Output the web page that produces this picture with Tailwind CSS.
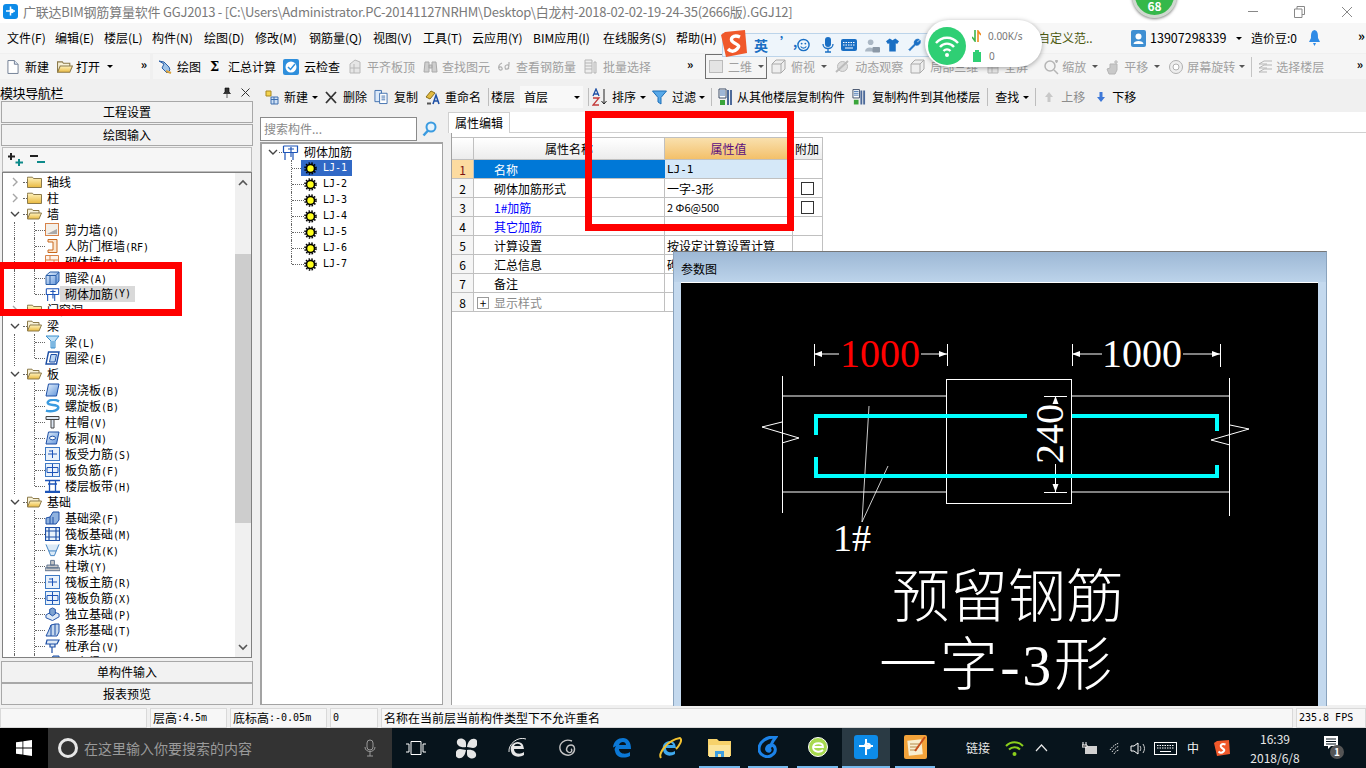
<!DOCTYPE html>
<html lang="zh"><head><meta charset="utf-8"><title>GGJ2013</title>
<script src="https://cdn.jsdelivr.net/npm/@tailwindcss/browser@4"></script></head>
<body class="m-0 overflow-hidden bg-white">
<svg class="absolute h-0 w-0" xmlns="http://www.w3.org/2000/svg">
<defs>
<linearGradient id="fy" x1="0" y1="0" x2="0" y2="1"><stop offset="0" stop-color="#fff3bf"/><stop offset="1" stop-color="#e9b93f"/></linearGradient>
<linearGradient id="bl" x1="0" y1="0" x2="1" y2="1"><stop offset="0" stop-color="#e8f2fc"/><stop offset="1" stop-color="#5e93da"/></linearGradient>
</defs>
<symbol id="folder" viewBox="0 0 15 12"><path d="M.5 2.500V1.200h5l1 1.300h8v9H.5z" fill="url(#fy)" stroke="#8c7a4a"/></symbol>
<symbol id="open" viewBox="0 0 15 12"><path d="M.5 11V1.200h4.500l1 1.300h6V5" fill="#f7f1d8" stroke="#8c7a4a"/><path d="M.5 11 3 5h11.500l-2.500 6z" fill="url(#fy)" stroke="#8c7a4a"/></symbol>
<symbol id="cr" viewBox="0 0 10 10"><path d="M3 1l4 4-4 4" fill="none" stroke="#a6a6a6" stroke-width="1.400"/></symbol>
<symbol id="cd" viewBox="0 0 10 10"><path d="M1 3l4 4 4-4" fill="none" stroke="#444" stroke-width="1.400"/></symbol>
<symbol id="shear" viewBox="0 0 15 14"><rect x=".5" y=".5" width="13" height="12" fill="#f3efe8" stroke="#d7834a"/><path d="M2 11h10V6z" fill="#a9a9a9"/></symbol>
<symbol id="door" viewBox="0 0 15 14"><path d="M3 .5h9v13H3v-2.500h5V3H3z" fill="#fbe6cf" stroke="#c9691f"/></symbol>
<symbol id="brick" viewBox="0 0 15 14"><path d="M.5.500h13v13H.5zM.5 5h13M5 .5V5M9 5v4M.5 9h13" fill="#fdf3ea" stroke="#d7834a"/></symbol>
<symbol id="box" viewBox="0 0 15 14"><path d="M1 4.500 5 1h9v9l-3 3.500H1z" fill="url(#bl)" stroke="#2a5fa8"/><path d="M1 4.500h10V13.500M11 4.500 14 1M5 5v8" fill="none" stroke="#2a5fa8"/></symbol>
<symbol id="rebar" viewBox="0 0 17 15"><path d="M1.500 1h14v6.500M1.500 1v6.500h14M3 7.500V15M11 7.500V15M6 4h6M9 2v10" fill="none" stroke="#1d54b8" stroke-width="1.200"/></symbol>
<symbol id="beam" viewBox="0 0 15 14"><path d="M1 1h13L10 6v7H6V6z" fill="#bfe0f7" stroke="#3a8fcc"/><path d="M8 6v7" stroke="#3a8fcc"/></symbol>
<symbol id="ring" viewBox="0 0 15 14"><path d="M3.500 1H14l-2.500 12H1z" fill="#fff" stroke="#1d4fa5" stroke-width="1.400"/><path d="M6 3.500h5.500L10 11H4.500z" fill="#bcd5f2" stroke="#1d4fa5"/></symbol>
<symbol id="slab" viewBox="0 0 15 14"><path d="M3.500 1H14l-2.500 12H1z" fill="url(#bl)" stroke="#1d4fa5"/></symbol>
<symbol id="spiral" viewBox="0 0 16 14"><path d="M15 2C9-1 2 1 3 4s10 1 11 4-6 6-13 4" fill="none" stroke="#3a9be0" stroke-width="2.600"/></symbol>
<symbol id="cap" viewBox="0 0 15 14"><path d="M1 1.500h13v3H1zM6 4.500h3V13H6z" fill="#dfe8f3" stroke="#444"/></symbol>
<symbol id="hole" viewBox="0 0 15 14"><path d="M3.500 1H14l-2.500 12H1z" fill="url(#bl)" stroke="#1d4fa5"/><ellipse cx="7.500" cy="7" rx="3" ry="1.800" fill="#fff" stroke="#1d4fa5"/></symbol>
<symbol id="panel" viewBox="0 0 15 14"><rect x=".5" y=".5" width="14" height="13" fill="#e9f2fb" stroke="#3e79c4"/><path d="M3 7h9M7.500 3v8M4 4h3" fill="none" stroke="#1d54b8"/></symbol>
<symbol id="panel2" viewBox="0 0 15 14"><rect x=".5" y=".5" width="14" height="13" fill="#e9f2fb" stroke="#3e79c4"/><path d="M2 4.500h11v5H2zM7.500 1v12" fill="none" stroke="#1d54b8"/></symbol>
<symbol id="strip" viewBox="0 0 15 14"><path d="M0 1.500h15M0 12.500h15M4.500 2v10M10.500 2v10M3 5h9" fill="none" stroke="#1d54b8" stroke-width="1.300"/><rect y="12" width="15" height="2" fill="#1d54b8"/></symbol>
<symbol id="fbeam" viewBox="0 0 15 14"><path d="M1 13V7l4-1 3-5h6v8l-3 4z" fill="#8fb2df" stroke="#1d4fa5"/><path d="M5 6v7M8 6v7" stroke="#1d4fa5"/></symbol>
<symbol id="raft" viewBox="0 0 15 14"><path d="M.5.500h14v13H.5zM4 .5v13M11 .5v13M.5 4h14M.5 10h14" fill="#e9f2fb" stroke="#1d4fa5" stroke-width="1.200"/></symbol>
<symbol id="sump" viewBox="0 0 16 14"><path d="M1 1l3 7h8l3-7M4 8l2 5h4l2-5" fill="#dbeaf7" stroke="#3c7fc0"/></symbol>
<symbol id="pier" viewBox="0 0 16 14"><path d="M6 1h4v5H6zM2 6h12v3H2zM0 9h16v3H0z" fill="#c9c9c9" stroke="#5a6f8c"/></symbol>
<symbol id="indep" viewBox="0 0 16 14"><path d="M1 8l7-4 7 3v3l-7 4-7-3z" fill="#dfeaf6" stroke="#1d4fa5"/><path d="M5 7V2l3-1.500L11 2v5L8 9z" fill="#7ea3d1" stroke="#1d4fa5"/></symbol>
<symbol id="stripf" viewBox="0 0 15 14"><path d="M1 13l2-4 3-7 4-1h4v8l-2 4zM6 2v11M10 1v11" fill="#c5d8ee" stroke="#1d4fa5"/></symbol>
<symbol id="pile" viewBox="0 0 15 14"><path d="M2 1h12l-2 4H1zM5 5h5v3H5zM7 8v6" fill="#dfeaf6" stroke="#1d4fa5" stroke-width="1.200"/></symbol>
<symbol id="lj" viewBox="0 0 13 13"><circle cx="6.500" cy="6.500" r="4.800" fill="#000"/><circle cx="6.500" cy="6.500" r="5.500" fill="none" stroke="#000" stroke-width="1.600" stroke-dasharray="1.500 1.400"/><circle cx="6.500" cy="6.500" r="3.200" fill="#ffff1e"/></symbol>
<symbol id="grey" viewBox="0 0 15 15"><path d="M3 14V5l5-4 5 2v11zM3 9h10M7 5v9" fill="#e6e6e6" stroke="#b8b8b8"/></symbol>
<symbol id="cube" viewBox="0 0 15 15"><path d="M1 14V5l4-4h9v9l-4 4zM1 5h9v9M10 5l4-4" fill="#eee" stroke="#aaa"/></symbol>
<symbol id="doc" viewBox="0 0 13 16"><path d="M1 1h7l4 4v10H1z" fill="#fff" stroke="#6b7a90"/><path d="M8 1v4h4" fill="#dfe8f3" stroke="#6b7a90"/></symbol>
<symbol id="sheets" viewBox="0 0 15 16"><path d="M1 1h7v12H1z" fill="#dce9f8" stroke="#3e6fae"/><path d="M6 4h8v11H6z" fill="#fff" stroke="#3e6fae"/><path d="M8 7h4M8 9h4M8 11h4" stroke="#3e6fae"/></symbol>
<symbol id="copy2" viewBox="0 0 15 18"><path d="M1 1h7v9H1z" fill="#fff" stroke="#3c4c66"/><path d="M2 3h5M2 5h5M2 7h5" stroke="#3e6fae"/><path d="M10 2v15M13 2v15" stroke="#4d6a9a" stroke-width="2"/><rect x="2" y="12" width="5" height="5" fill="#3aa53a"/></symbol>
</svg>

<div class="relative flex h-[768px] w-[1366px] flex-col overflow-hidden bg-[#f0f0f0] text-[12px] leading-none text-black font-['Noto_Sans_CJK_SC','Noto_Sans',sans-serif]">

<!-- title bar -->
<header class="flex h-[23px] shrink-0 items-center bg-white text-[#7a7a7a]">
  <svg class="ml-[3px] h-[15px] w-[15px]" viewBox="0 0 15 15"><rect width="15" height="15" rx="3" fill="#0d8be8"/><path d="M7.500 2.500v9M3 7h4c0-2 3-2 3 0s-2 2-2 0M8 7h4" fill="none" stroke="#fff" stroke-width="1.500"/></svg>
  <span class="ml-[5px] whitespace-nowrap text-[13px] tracking-[-0.22px]">广联达BIM钢筋算量软件 GGJ2013 - [C:\Users\Administrator.PC-20141127NRHM\Desktop\白龙村-2018-02-02-19-24-35(2666版).GGJ12]</span>
  <span class="ml-auto flex items-center">
    <i class="h-px w-[10px] bg-[#888]"></i>
    <svg class="ml-[36px] h-[12px] w-[11px]" viewBox="0 0 11 12"><path d="M3 3V.5h7.500v8H8M.5 3h7.500v8.500H.5z" fill="none" stroke="#888"/></svg>
    <svg class="ml-[36px] mr-[13px] h-[12px] w-[12px]" viewBox="0 0 12 12"><path d="M1 1l10 10M11 1 1 11" stroke="#888"/></svg>
  </span>
</header>

<!-- menu bar -->
<nav class="flex h-[30px] shrink-0 items-center bg-[#f7f7f7] pl-[7px] whitespace-nowrap">
  <span class="w-[48px]">文件(F)</span><span class="w-[49px]">编辑(E)</span><span class="w-[48px]">楼层(L)</span><span class="w-[52px]">构件(N)</span><span class="w-[51px]">绘图(D)</span><span class="w-[54px]">修改(M)</span><span class="w-[64px]">钢筋量(Q)</span><span class="w-[50px]">视图(V)</span><span class="w-[49px]">工具(T)</span><span class="w-[61px]">云应用(Y)</span><span class="w-[70px]">BIM应用(I)</span><span class="w-[73px]">在线服务(S)</span><span class="w-[40px]">帮助(H)</span>
  <span class="ml-[322px] w-[52px] text-[#4d5a10]">自定义范..</span>
  <svg class="ml-[41px] h-[17px] w-[15px]" viewBox="0 0 15 17"><rect width="15" height="17" rx="2" fill="#3f8fd2"/><circle cx="7.500" cy="6.500" r="3" fill="#fff"/><path d="M2.500 14c0-4 10-4 10 0z" fill="#fff"/></svg>
  <span class="ml-[4px] w-[77px] text-[12.500px]">13907298339</span>
  <i class="ml-[9px] h-0 w-0 border-x-[3px] border-t-[3px] border-x-transparent border-t-black"></i>
  <span class="ml-[9px] w-[46px]">造价豆:0</span>
  <svg class="ml-[12px] h-[16px] w-[11px]" viewBox="0 0 11 16"><path d="M5.500 0C2 1 2 4 2 8l-2 4h11L9 8c0-4 0-7-3.500-8zM4 13h3l-1.500 3z" fill="#2f8be6"/></svg>
  <span class="ml-[38px] -mt-[6px] text-[13px] font-bold">»</span>
</nav>

<!-- toolbar 1 -->
<div class="mt-px flex h-[25px] shrink-0 items-center whitespace-nowrap">
  <div class="flex h-full w-[150px] items-center bg-[#f5f5f5]">
    <svg class="ml-[7px] h-[16px] w-[12px]"><use href="#doc"/></svg>
    <span class="ml-[6px]">新建</span>
    <svg class="ml-[8px] h-[14px] w-[16px]"><use href="#open"/></svg>
    <span class="ml-[3px]">打开</span>
    <i class="ml-[7px] h-0 w-0 border-x-[3px] border-t-[3px] border-x-transparent border-t-black"></i>
    <span class="ml-auto mr-[3px] -mt-[6px] text-[12px] font-bold">»</span>
  </div>
  <div class="ml-[3px] flex h-full flex-1 items-center bg-[#f5f5f5] text-[#a0a0a0]">
    <svg class="ml-[4px] h-[16px] w-[16px]" viewBox="0 0 16 16"><path d="M2 2l5 3-2 4 5 5 3-3-1-3-5-5z" fill="#9fc3e8" stroke="#2a5fa8"/><path d="M9 12l5 2" stroke="#d9a13a" stroke-width="2"/></svg>
    <span class="ml-[4px] text-black">绘图</span>
    <span class="ml-[9px] w-[10px] text-[13px] font-bold text-black font-['DejaVu_Serif']">Σ</span>
    <span class="ml-[8px] text-black">汇总计算</span>
    <svg class="ml-[7px] h-[16px] w-[16px]" viewBox="0 0 16 16"><rect width="16" height="16" rx="2" fill="#2f8fdc"/><circle cx="8" cy="8" r="5.500" fill="#fff"/><path d="M5 8l2.500 2.500L12 5" fill="none" stroke="#2f8fdc" stroke-width="1.500"/></svg>
    <span class="ml-[5px] text-black">云检查</span>
    <svg class="ml-[7px] h-[15px] w-[15px]"><use href="#grey"/></svg>
    <span class="ml-[5px]">平齐板顶</span>
    <svg class="ml-[8px] h-[15px] w-[15px]" viewBox="0 0 15 15"><path d="M2 3h4v10H1zM9 3h4l1 10H9zM6 6h3v3H6z" fill="#cfcfcf" stroke="#aaa"/></svg>
    <span class="ml-[4px]">查找图元</span>
    <svg class="ml-[7px] h-[12px] w-[13px]" viewBox="0 0 13 12"><path d="M5 2C2 3 1 6 2 8s4 1 3-1-3-1-3 0M8 8c3 1 4-1 4-5V1m0 4c-1-2-4-1-4 1s2 3 4 1" fill="none" stroke="#b0b0b0" stroke-width="1.200"/></svg>
    <span class="ml-[6px]">查看钢筋量</span>
    <svg class="ml-[8px] h-[15px] w-[13px]" viewBox="0 0 13 15"><path d="M1 1h7v13H1zM1 4h7M1 7h7M1 10h7M10 3h2v11h-2z" fill="#eee" stroke="#b5b5b5"/></svg>
    <span class="ml-[6px]">批量选择</span>
    <span class="ml-[36px] w-[8px] -mt-[6px] font-bold text-black">»</span>
    <span class="ml-[10px] flex h-full w-[62px] items-center border border-[#707070] pl-[3px]">
      <i class="h-[13px] w-[14px] border border-[#bbb] bg-[#e4e4e4]"></i>
      <span class="ml-[5px]">二维</span>
      <i class="ml-[6px] h-0 w-0 border-x-[3px] border-t-[3px] border-x-transparent border-t-[#555]"></i>
    </span>
    <svg class="ml-[4px] h-[15px] w-[15px]"><use href="#cube"/></svg>
    <span class="ml-[5px]">俯视</span>
    <i class="ml-[6px] h-0 w-0 border-x-[3px] border-t-[3px] border-x-transparent border-t-[#555]"></i>
    <svg class="ml-[8px] h-[15px] w-[15px]" viewBox="0 0 15 15"><circle cx="7.500" cy="7.500" r="5" fill="#ddd" stroke="#bbb"/><path d="M1 13 13 2" stroke="#bbb" stroke-width="2"/></svg>
    <span class="ml-[5px]">动态观察</span>
    <svg class="ml-[7px] h-[15px] w-[15px]"><use href="#cube"/></svg>
    <span class="ml-[5px]">局部三维</span>
    <svg class="ml-[7px] h-[15px] w-[15px]"><use href="#grey"/></svg>
    <span class="ml-[4px]">全屏</span>
    <svg class="ml-[15px] h-[16px] w-[16px]" viewBox="0 0 16 16"><circle cx="7" cy="7" r="5" fill="#f4f4f4" stroke="#b5b5b5" stroke-width="1.500"/><path d="M11 11l4 4M12 2h3M13.500 1v3" stroke="#b5b5b5" stroke-width="1.500"/></svg>
    <span class="ml-[3px]">缩放</span>
    <i class="ml-[6px] h-0 w-0 border-x-[3px] border-t-[3px] border-x-transparent border-t-[#555]"></i>
    <svg class="ml-[7px] h-[16px] w-[16px]" viewBox="0 0 16 16"><path d="M4 15l-2-5 3-1V5h7v6l-2 4z" fill="#c9c9c9" stroke="#b5b5b5"/><path d="M11 1v4M9 3h4" stroke="#b5b5b5"/></svg>
    <span class="ml-[3px]">平移</span>
    <i class="ml-[6px] h-0 w-0 border-x-[3px] border-t-[3px] border-x-transparent border-t-[#555]"></i>
    <svg class="ml-[8px] h-[16px] w-[16px]" viewBox="0 0 16 16"><circle cx="8" cy="8" r="6.500" fill="#eee" stroke="#b0b0b0"/><circle cx="8" cy="8" r="3" fill="#fff" stroke="#b0b0b0"/></svg>
    <span class="ml-[3px]">屏幕旋转</span>
    <i class="ml-[4px] h-0 w-0 border-x-[3px] border-t-[3px] border-x-transparent border-t-[#555]"></i>
    <i class="ml-[6px] h-[20px] w-px bg-[#c4c4c4]"></i>
    <svg class="ml-[6px] h-[15px] w-[15px]" viewBox="0 0 15 15"><path d="M1 5l5-3h8M1 9l5-3h8M1 13l5-3h8M1 5h8M1 9h8M1 13h8" fill="none" stroke="#b5b5b5"/></svg>
    <span class="ml-[3px]">选择楼层</span>
    <span class="ml-auto mr-[3px] -mt-[6px] font-bold text-black">»</span>
  </div>
</div>

<!-- main -->
<main class="mt-[5px] flex min-h-0 flex-1">
  <!-- left -->
  <aside class="flex w-[255px] shrink-0 flex-col pl-px pr-[2px]">
    <div class="-ml-px flex h-[16px] items-center text-[13px] tracking-[-0.4px]">模块导航栏
      <svg class="ml-[160px] h-[11px] w-[8px]" viewBox="0 0 8 11"><path d="M2 1h4v4l1.500 1.500h-7L2 5zM4 7v4" fill="#333" stroke="#000" stroke-width=".6"/></svg>
      <svg class="ml-[10px] h-[9px] w-[9px]" viewBox="0 0 9 9"><path d="M.5.500l8 8M8.500.500l-8 8" stroke="#333"/></svg>
    </div>
    <button class="mt-px h-[22px] border border-[#a8a8a8] bg-[#f2f2f2]">工程设置</button>
    <button class="mt-px h-[22px] border border-[#a8a8a8] bg-[#f2f2f2]">绘图输入</button>
    <div class="ml-px mr-px mt-px flex h-[25px] shrink-0 items-center border border-[#bdbdbd] bg-[#f6f6f6] pl-[4px]">
      <svg class="h-[15px] w-[17px]" viewBox="0 0 17 15"><path d="M4 1v7M1 4.500h7" stroke="#222" stroke-width="2"/><path d="M12 7v7M8.500 10.500h7.500" stroke="#0d8a8a" stroke-width="2"/></svg>
      <svg class="ml-[6px] h-[15px] w-[16px]" viewBox="0 0 16 15"><path d="M0 4h8" stroke="#222" stroke-width="2"/><path d="M7 10h8" stroke="#0d8a8a" stroke-width="2"/></svg>
    </div>
    <div class="relative mx-px h-[486px] shrink-0 overflow-hidden border border-[#808080] bg-white pt-px [&_small]:text-[10px] [&_small]:font-['DejaVu_Sans_Mono']">
      <div class="absolute right-0 top-0 flex h-full w-[16px] flex-col items-center bg-[#f0f0f0]">
        <svg class="mt-[5px] h-[10px] w-[10px] shrink-0" viewBox="0 0 10 10"><path d="M1 7l4-4 4 4" fill="none" stroke="#555" stroke-width="1.600"/></svg>
        <i class="mt-[66px] h-[269px] w-full shrink-0 bg-[#cdcdcd]"></i>
        <svg class="mt-auto mb-[5px] h-[10px] w-[10px] shrink-0" viewBox="0 0 10 10"><path d="M1 3l4 4 4-4" fill="none" stroke="#555" stroke-width="1.600"/></svg>
      </div>
      <div class="flex h-4 items-center"><svg class="ml-[7px] h-[10px] w-[10px]"><use href="#cr"/></svg><i class="ml-[3px] w-[4px] border-t border-dotted border-[#666]"></i><svg class="h-[12px] w-[15px]"><use href="#folder"/></svg><span class="ml-[5px]">轴线</span></div>
      <div class="flex h-4 items-center"><svg class="ml-[7px] h-[10px] w-[10px]"><use href="#cr"/></svg><i class="ml-[3px] w-[4px] border-t border-dotted border-[#666]"></i><svg class="h-[12px] w-[15px]"><use href="#folder"/></svg><span class="ml-[5px]">柱</span></div>
      <div class="flex h-4 items-center"><svg class="ml-[7px] h-[10px] w-[10px]"><use href="#cd"/></svg><i class="ml-[3px] w-[4px] border-t border-dotted border-[#666]"></i><svg class="h-[12px] w-[15px]"><use href="#open"/></svg><span class="ml-[5px]">墙</span></div>
      <div class="flex h-4 items-center"><i class="w-[12px] self-stretch border-r border-dotted border-[#666]"></i><i class="w-[20px] self-stretch border-r border-dotted border-[#666]"></i><i class="w-[10px] border-t border-dotted border-[#666]"></i><svg class="h-[14px] w-[15px]"><use href="#shear"/></svg><span class="ml-[5px]">剪力墙<small>(Q)</small></span></div>
      <div class="flex h-4 items-center"><i class="w-[12px] self-stretch border-r border-dotted border-[#666]"></i><i class="w-[20px] self-stretch border-r border-dotted border-[#666]"></i><i class="w-[10px] border-t border-dotted border-[#666]"></i><svg class="h-[14px] w-[15px]"><use href="#door"/></svg><span class="ml-[5px]">人防门框墙<small>(RF)</small></span></div>
      <div class="flex h-4 items-center"><i class="w-[12px] self-stretch border-r border-dotted border-[#666]"></i><i class="w-[20px] self-stretch border-r border-dotted border-[#666]"></i><i class="w-[10px] border-t border-dotted border-[#666]"></i><svg class="h-[14px] w-[15px]"><use href="#brick"/></svg><span class="ml-[5px]">砌体墙<small>(Q)</small></span></div>
      <div class="flex h-4 items-center"><i class="w-[12px] self-stretch border-r border-dotted border-[#666]"></i><i class="w-[20px] self-stretch border-r border-dotted border-[#666]"></i><i class="w-[10px] border-t border-dotted border-[#666]"></i><svg class="h-[14px] w-[15px]"><use href="#box"/></svg><span class="ml-[5px]">暗梁<small>(A)</small></span></div>
      <div class="flex h-4 items-center"><i class="w-[12px] self-stretch border-r border-dotted border-[#666]"></i><i class="h-2 w-[20px] self-start border-r border-dotted border-[#666]"></i><i class="w-[10px] border-t border-dotted border-[#666]"></i><svg class="h-[15px] w-[15px]"><use href="#rebar"/></svg><span class="flex h-4 items-center bg-[#d9d9d9] pl-[5px] pr-[4px]">砌体加筋<small>(Y)</small></span></div>
      <div class="flex h-4 items-center"><svg class="ml-[7px] h-[10px] w-[10px]"><use href="#cr"/></svg><i class="ml-[3px] w-[4px] border-t border-dotted border-[#666]"></i><svg class="h-[12px] w-[15px]"><use href="#folder"/></svg><span class="ml-[5px]">门窗洞</span></div>
      <div class="flex h-4 items-center"><svg class="ml-[7px] h-[10px] w-[10px]"><use href="#cd"/></svg><i class="ml-[3px] w-[4px] border-t border-dotted border-[#666]"></i><svg class="h-[12px] w-[15px]"><use href="#open"/></svg><span class="ml-[5px]">梁</span></div>
      <div class="flex h-4 items-center"><i class="w-[12px] self-stretch border-r border-dotted border-[#666]"></i><i class="w-[20px] self-stretch border-r border-dotted border-[#666]"></i><i class="w-[10px] border-t border-dotted border-[#666]"></i><svg class="h-[14px] w-[15px]"><use href="#beam"/></svg><span class="ml-[5px]">梁<small>(L)</small></span></div>
      <div class="flex h-4 items-center"><i class="w-[12px] self-stretch border-r border-dotted border-[#666]"></i><i class="h-2 w-[20px] self-start border-r border-dotted border-[#666]"></i><i class="w-[10px] border-t border-dotted border-[#666]"></i><svg class="h-[14px] w-[15px]"><use href="#ring"/></svg><span class="ml-[5px]">圈梁<small>(E)</small></span></div>
      <div class="flex h-4 items-center"><svg class="ml-[7px] h-[10px] w-[10px]"><use href="#cd"/></svg><i class="ml-[3px] w-[4px] border-t border-dotted border-[#666]"></i><svg class="h-[12px] w-[15px]"><use href="#open"/></svg><span class="ml-[5px]">板</span></div>
      <div class="flex h-4 items-center"><i class="w-[12px] self-stretch border-r border-dotted border-[#666]"></i><i class="w-[20px] self-stretch border-r border-dotted border-[#666]"></i><i class="w-[10px] border-t border-dotted border-[#666]"></i><svg class="h-[14px] w-[15px]"><use href="#slab"/></svg><span class="ml-[5px]">现浇板<small>(B)</small></span></div>
      <div class="flex h-4 items-center"><i class="w-[12px] self-stretch border-r border-dotted border-[#666]"></i><i class="w-[20px] self-stretch border-r border-dotted border-[#666]"></i><i class="w-[10px] border-t border-dotted border-[#666]"></i><svg class="h-[14px] w-[15px]"><use href="#spiral"/></svg><span class="ml-[5px]">螺旋板<small>(B)</small></span></div>
      <div class="flex h-4 items-center"><i class="w-[12px] self-stretch border-r border-dotted border-[#666]"></i><i class="w-[20px] self-stretch border-r border-dotted border-[#666]"></i><i class="w-[10px] border-t border-dotted border-[#666]"></i><svg class="h-[14px] w-[15px]"><use href="#cap"/></svg><span class="ml-[5px]">柱帽<small>(V)</small></span></div>
      <div class="flex h-4 items-center"><i class="w-[12px] self-stretch border-r border-dotted border-[#666]"></i><i class="w-[20px] self-stretch border-r border-dotted border-[#666]"></i><i class="w-[10px] border-t border-dotted border-[#666]"></i><svg class="h-[14px] w-[15px]"><use href="#hole"/></svg><span class="ml-[5px]">板洞<small>(N)</small></span></div>
      <div class="flex h-4 items-center"><i class="w-[12px] self-stretch border-r border-dotted border-[#666]"></i><i class="w-[20px] self-stretch border-r border-dotted border-[#666]"></i><i class="w-[10px] border-t border-dotted border-[#666]"></i><svg class="h-[14px] w-[15px]"><use href="#panel"/></svg><span class="ml-[5px]">板受力筋<small>(S)</small></span></div>
      <div class="flex h-4 items-center"><i class="w-[12px] self-stretch border-r border-dotted border-[#666]"></i><i class="w-[20px] self-stretch border-r border-dotted border-[#666]"></i><i class="w-[10px] border-t border-dotted border-[#666]"></i><svg class="h-[14px] w-[15px]"><use href="#panel2"/></svg><span class="ml-[5px]">板负筋<small>(F)</small></span></div>
      <div class="flex h-4 items-center"><i class="w-[12px] self-stretch border-r border-dotted border-[#666]"></i><i class="h-2 w-[20px] self-start border-r border-dotted border-[#666]"></i><i class="w-[10px] border-t border-dotted border-[#666]"></i><svg class="h-[14px] w-[15px]"><use href="#strip"/></svg><span class="ml-[5px]">楼层板带<small>(H)</small></span></div>
      <div class="flex h-4 items-center"><svg class="ml-[7px] h-[10px] w-[10px]"><use href="#cd"/></svg><i class="ml-[3px] w-[4px] border-t border-dotted border-[#666]"></i><svg class="h-[12px] w-[15px]"><use href="#open"/></svg><span class="ml-[5px]">基础</span></div>
      <div class="flex h-4 items-center"><i class="w-[12px] self-stretch border-r border-dotted border-[#666]"></i><i class="w-[20px] self-stretch border-r border-dotted border-[#666]"></i><i class="w-[10px] border-t border-dotted border-[#666]"></i><svg class="h-[14px] w-[15px]"><use href="#fbeam"/></svg><span class="ml-[5px]">基础梁<small>(F)</small></span></div>
      <div class="flex h-4 items-center"><i class="w-[12px] self-stretch border-r border-dotted border-[#666]"></i><i class="w-[20px] self-stretch border-r border-dotted border-[#666]"></i><i class="w-[10px] border-t border-dotted border-[#666]"></i><svg class="h-[14px] w-[15px]"><use href="#raft"/></svg><span class="ml-[5px]">筏板基础<small>(M)</small></span></div>
      <div class="flex h-4 items-center"><i class="w-[12px] self-stretch border-r border-dotted border-[#666]"></i><i class="w-[20px] self-stretch border-r border-dotted border-[#666]"></i><i class="w-[10px] border-t border-dotted border-[#666]"></i><svg class="h-[14px] w-[15px]"><use href="#sump"/></svg><span class="ml-[5px]">集水坑<small>(K)</small></span></div>
      <div class="flex h-4 items-center"><i class="w-[12px] self-stretch border-r border-dotted border-[#666]"></i><i class="w-[20px] self-stretch border-r border-dotted border-[#666]"></i><i class="w-[10px] border-t border-dotted border-[#666]"></i><svg class="h-[14px] w-[15px]"><use href="#pier"/></svg><span class="ml-[5px]">柱墩<small>(Y)</small></span></div>
      <div class="flex h-4 items-center"><i class="w-[12px] self-stretch border-r border-dotted border-[#666]"></i><i class="w-[20px] self-stretch border-r border-dotted border-[#666]"></i><i class="w-[10px] border-t border-dotted border-[#666]"></i><svg class="h-[14px] w-[15px]"><use href="#panel"/></svg><span class="ml-[5px]">筏板主筋<small>(R)</small></span></div>
      <div class="flex h-4 items-center"><i class="w-[12px] self-stretch border-r border-dotted border-[#666]"></i><i class="w-[20px] self-stretch border-r border-dotted border-[#666]"></i><i class="w-[10px] border-t border-dotted border-[#666]"></i><svg class="h-[14px] w-[15px]"><use href="#panel2"/></svg><span class="ml-[5px]">筏板负筋<small>(X)</small></span></div>
      <div class="flex h-4 items-center"><i class="w-[12px] self-stretch border-r border-dotted border-[#666]"></i><i class="w-[20px] self-stretch border-r border-dotted border-[#666]"></i><i class="w-[10px] border-t border-dotted border-[#666]"></i><svg class="h-[14px] w-[15px]"><use href="#indep"/></svg><span class="ml-[5px]">独立基础<small>(P)</small></span></div>
      <div class="flex h-4 items-center"><i class="w-[12px] self-stretch border-r border-dotted border-[#666]"></i><i class="w-[20px] self-stretch border-r border-dotted border-[#666]"></i><i class="w-[10px] border-t border-dotted border-[#666]"></i><svg class="h-[14px] w-[15px]"><use href="#stripf"/></svg><span class="ml-[5px]">条形基础<small>(T)</small></span></div>
      <div class="flex h-4 items-center"><i class="w-[12px] self-stretch border-r border-dotted border-[#666]"></i><i class="w-[20px] self-stretch border-r border-dotted border-[#666]"></i><i class="w-[10px] border-t border-dotted border-[#666]"></i><svg class="h-[14px] w-[15px]"><use href="#pile"/></svg><span class="ml-[5px]">桩承台<small>(V)</small></span></div>
      <div class="flex h-4 items-center"><i class="w-[12px] self-stretch border-r border-dotted border-[#666]"></i><i class="w-[20px] self-stretch border-r border-dotted border-[#666]"></i><i class="w-[10px] border-t border-dotted border-[#666]"></i><svg class="h-[14px] w-[15px]"><use href="#fbeam"/></svg><span class="ml-[5px]">承台梁<small>(P)</small></span></div>
    </div>
    <button class="mt-[3px] h-[22px] shrink-0 border border-[#a8a8a8] bg-[#f2f2f2]">单构件输入</button>
    <button class="h-[22px] shrink-0 border border-[#a8a8a8] bg-[#f2f2f2]">报表预览</button>
  </aside>

  <!-- right of left panel -->
  <section class="flex min-w-0 flex-1 flex-col">
    <div class="flex h-[28px] shrink-0 items-center whitespace-nowrap pb-[2px]">
      <svg class="ml-[10px] h-[15px] w-[14px]" viewBox="0 0 14 15"><path d="M1 1h5v5H1z" fill="#f3d24e" stroke="#a8871e"/><path d="M6 7h7v7H6z" fill="#cfe1f6" stroke="#3e6fae"/><path d="M6 9.500h7M9 7v7" stroke="#3e6fae"/></svg>
      <span class="ml-[5px]">新建</span>
      <i class="ml-[4px] h-0 w-0 border-x-[3px] border-t-[3px] border-x-transparent border-t-black"></i>
      <svg class="ml-[7px] h-[13px] w-[12px]" viewBox="0 0 12 13"><path d="M1 1l10 11M11 1 1 12" stroke="#333" stroke-width="1.800"/></svg>
      <span class="ml-[6px]">删除</span>
      <svg class="ml-[7px] h-[16px] w-[14px]"><use href="#sheets"/></svg>
      <span class="ml-[6px]">复制</span>
      <svg class="ml-[7px] h-[16px] w-[16px]" viewBox="0 0 16 16"><path d="M1 8l5-6 4 2-5 6z" fill="#e2bb42" stroke="#8a6e17"/><path d="M2 14.500h4" stroke="#555" stroke-width="2"/><path d="M8 15l3-9 3 9M9 12h4" fill="none" stroke="#1d4fa5" stroke-width="1.500"/></svg>
      <span class="ml-[4px]">重命名</span>
      <i class="ml-[7px] h-[18px] w-px bg-[#bdbdbd]"></i>
      <span class="ml-[2px]">楼层</span>
      <span class="ml-[5px] flex h-[22px] w-[63px] items-center bg-[#f8f8f8] pl-[4px]">首层<i class="ml-auto mr-[3px] h-0 w-0 border-x-[3px] border-t-[3px] border-x-transparent border-t-black"></i></span>
      <i class="ml-[5px] h-[18px] w-px bg-[#bdbdbd]"></i>
      <svg class="ml-[3px] h-[18px] w-[16px]" viewBox="0 0 16 18"><path d="M1 8l3-7 3 7M2 6h4" fill="none" stroke="#1d4fa5" stroke-width="1.300"/><path d="M1 10h6L1 17h6" fill="none" stroke="#c23a3a" stroke-width="1.300"/><path d="M12 1v15M9.500 13l2.500 3 2.500-3" fill="none" stroke="#222"/></svg>
      <span class="ml-[4px]">排序</span>
      <i class="ml-[4px] h-0 w-0 border-x-[3px] border-t-[3px] border-x-transparent border-t-black"></i>
      <svg class="ml-[6px] h-[15px] w-[15px]" viewBox="0 0 15 15"><path d="M.5 1h14L9 7.500V14l-3-2V7.500z" fill="#57a8e8" stroke="#1d6fb8"/></svg>
      <span class="ml-[5px]">过滤</span>
      <i class="ml-[3px] h-0 w-0 border-x-[3px] border-t-[3px] border-x-transparent border-t-black"></i>
      <i class="ml-[6px] h-[18px] w-px bg-[#bdbdbd]"></i>
      <svg class="ml-[6px] h-[18px] w-[15px]"><use href="#copy2"/></svg>
      <span class="ml-[4px]">从其他楼层复制构件</span>
      <svg class="ml-[7px] h-[18px] w-[14px]"><use href="#copy2"/></svg>
      <span class="ml-[6px]">复制构件到其他楼层</span>
      <i class="ml-[7px] h-[18px] w-px bg-[#bdbdbd]"></i>
      <span class="ml-[7px]">查找</span>
      <i class="ml-[4px] h-0 w-0 border-x-[3px] border-t-[3px] border-x-transparent border-t-black"></i>
      <i class="ml-[6px] h-[18px] w-px bg-[#bdbdbd]"></i>
      <svg class="ml-[9px] h-[10px] w-[8px]" viewBox="0 0 8 10"><path d="M4 0l4 5H5.500v5h-3V5H0z" fill="#c8c8c8"/></svg>
      <span class="ml-[8px] text-[#8c8c8c]">上移</span>
      <svg class="ml-[12px] h-[10px] w-[8px]" viewBox="0 0 8 10"><path d="M4 10 0 5h2.500V0h3v5H8z" fill="#3e78d8"/></svg>
      <span class="ml-[7px]">下移</span>
    </div>
    <div class="flex min-h-0 flex-1">
      <!-- component column -->
      <div class="ml-[5px] flex w-[183px] shrink-0 flex-col">
        <div class="mt-[5px] flex h-[24px] shrink-0 items-center">
          <span class="flex h-[24px] w-[157px] items-center border border-[#8a8a8a] bg-white pl-[3px] text-[#8a8a8a]">搜索构件...</span>
          <svg class="ml-[5px] h-[16px] w-[15px]" viewBox="0 0 15 16"><circle cx="9" cy="6" r="4.500" fill="#e6f3fc" stroke="#3a9be0" stroke-width="2"/><path d="M6 9.500 1.500 14.500" stroke="#3a9be0" stroke-width="2.500"/></svg>
        </div>
        <div class="mt-px flex-1 border-2 border-b border-r border-[#a3a3a3] bg-white [&_small]:text-[10px] [&_small]:font-['DejaVu_Sans_Mono']">
          <div class="flex h-4 items-center"><svg class="ml-[6px] h-[10px] w-[10px]"><use href="#cd"/></svg><i class="ml-[1px] w-[3px] border-t border-dotted border-[#666]"></i><svg class="h-[15px] w-[17px]"><use href="#rebar"/></svg><span class="ml-[5px]">砌体加筋</span></div>
          <div class="flex h-4 items-center"><i class="h-full w-[30px] border-r border-dotted border-[#666]"></i><i class="w-[9px] border-t border-dotted border-[#666]"></i><span class="flex h-4 w-[51px] items-center bg-[#3169c6] pl-[3px] text-white"><svg class="h-[13px] w-[13px]"><use href="#lj"/></svg><small class="ml-[6px]">LJ-1</small></span></div>
          <div class="flex h-4 items-center"><i class="h-full w-[30px] border-r border-dotted border-[#666]"></i><i class="w-[12px] border-t border-dotted border-[#666]"></i><svg class="h-[13px] w-[13px]"><use href="#lj"/></svg><small class="ml-[6px]">LJ-2</small></div>
          <div class="flex h-4 items-center"><i class="h-full w-[30px] border-r border-dotted border-[#666]"></i><i class="w-[12px] border-t border-dotted border-[#666]"></i><svg class="h-[13px] w-[13px]"><use href="#lj"/></svg><small class="ml-[6px]">LJ-3</small></div>
          <div class="flex h-4 items-center"><i class="h-full w-[30px] border-r border-dotted border-[#666]"></i><i class="w-[12px] border-t border-dotted border-[#666]"></i><svg class="h-[13px] w-[13px]"><use href="#lj"/></svg><small class="ml-[6px]">LJ-4</small></div>
          <div class="flex h-4 items-center"><i class="h-full w-[30px] border-r border-dotted border-[#666]"></i><i class="w-[12px] border-t border-dotted border-[#666]"></i><svg class="h-[13px] w-[13px]"><use href="#lj"/></svg><small class="ml-[6px]">LJ-5</small></div>
          <div class="flex h-4 items-center"><i class="h-full w-[30px] border-r border-dotted border-[#666]"></i><i class="w-[12px] border-t border-dotted border-[#666]"></i><svg class="h-[13px] w-[13px]"><use href="#lj"/></svg><small class="ml-[6px]">LJ-6</small></div>
          <div class="flex h-4 items-center"><i class="h-2 w-[30px] self-start border-r border-dotted border-[#666]"></i><i class="w-[12px] border-t border-dotted border-[#666]"></i><svg class="h-[13px] w-[13px]"><use href="#lj"/></svg><small class="ml-[6px]">LJ-7</small></div>
        </div>
      </div>
      <!-- property pane -->
      <div class="ml-[5px] flex min-w-0 flex-1 flex-col">
        <div class="flex h-[21px] shrink-0">
          <span class="flex w-[62px] items-center justify-center border border-b-0 border-[#d0d0d0] bg-white">属性编辑</span>
          <span class="flex-1 border-b border-[#d0d0d0] bg-white"></span>
        </div>
        <div class="ml-[3px] flex-1 border-l border-[#a0a0a0] bg-white pt-[4px]">
          <div class="w-[371px] border-t border-[#c0c0c0]">
            <div class="flex h-[22px] border-b border-[#c0c0c0]">
              <span class="w-[22px] border-r border-[#c0c0c0] bg-gradient-to-b from-white to-[#ececec]"></span>
              <span class="flex w-[191px] items-center justify-center border-r border-[#c0c0c0] bg-gradient-to-b from-white to-[#ececec]">属性名称</span>
              <span class="flex w-[127px] items-center justify-center bg-gradient-to-b from-[#f9e0ad] to-[#f3c069] text-[#5b0f7f]">属性值</span>
              <span class="flex flex-1 items-center justify-center border-r border-[#c0c0c0] bg-gradient-to-b from-white to-[#ececec]">附加</span>
            </div>
            <div class="[&>div>span]:pt-px">
            <div class="flex h-[19px] items-center border-b border-[#c0c0c0]">
              <span class="flex h-full w-[22px] items-center justify-center border-r border-[#c0c0c0] bg-[#fcdba0] text-[#7a1010]">1</span>
              <span class="flex h-full w-[191px] items-center bg-[#0078d7] pl-[20px] text-white">名称</span>
              <span class="flex h-full w-[127px] items-center bg-[#d5e8f8] pl-[2px] text-[11px] font-['DejaVu_Sans_Mono']">LJ-1</span>
              <span class="h-full flex-1 border-x border-[#c0c0c0]"></span>
            </div>
            <div class="flex h-[19px] items-center border-b border-[#c0c0c0]">
              <span class="flex h-full w-[22px] items-center justify-center border-r border-[#c0c0c0] bg-[#f5f5f5]">2</span>
              <span class="flex h-full w-[191px] items-center border-r border-[#c0c0c0] pl-[20px]">砌体加筋形式</span>
              <span class="flex h-full w-[127px] items-center pl-[2px]">一字-3形</span>
              <span class="flex h-full flex-1 items-center justify-center border-x border-[#c0c0c0]"><i class="h-[13px] w-[13px] border border-[#333] bg-white"></i></span>
            </div>
            <div class="flex h-[19px] items-center border-b border-[#c0c0c0]">
              <span class="flex h-full w-[22px] items-center justify-center border-r border-[#c0c0c0] bg-[#f5f5f5]">3</span>
              <span class="flex h-full w-[191px] items-center border-r border-[#c0c0c0] pl-[20px] text-[#0000ff]">1#加筋</span>
              <span class="flex h-full w-[127px] items-center pl-[2px] text-[11px]">2 Φ6@500</span>
              <span class="flex h-full flex-1 items-center justify-center border-x border-[#c0c0c0]"><i class="h-[13px] w-[13px] border border-[#333] bg-white"></i></span>
            </div>
            <div class="flex h-[19px] items-center border-b border-[#c0c0c0]">
              <span class="flex h-full w-[22px] items-center justify-center border-r border-[#c0c0c0] bg-[#f5f5f5]">4</span>
              <span class="flex h-full w-[191px] items-center border-r border-[#c0c0c0] pl-[20px] text-[#0000ff]">其它加筋</span>
              <span class="h-full w-[127px]"></span>
              <span class="h-full flex-1 border-x border-[#c0c0c0]"></span>
            </div>
            <div class="flex h-[19px] items-center border-b border-[#c0c0c0]">
              <span class="flex h-full w-[22px] items-center justify-center border-r border-[#c0c0c0] bg-[#f5f5f5]">5</span>
              <span class="flex h-full w-[191px] items-center border-r border-[#c0c0c0] pl-[20px]">计算设置</span>
              <span class="flex h-full w-[127px] items-center pl-[2px]">按设定计算设置计算</span>
              <span class="h-full flex-1 border-x border-[#c0c0c0]"></span>
            </div>
            <div class="flex h-[19px] items-center border-b border-[#c0c0c0]">
              <span class="flex h-full w-[22px] items-center justify-center border-r border-[#c0c0c0] bg-[#f5f5f5]">6</span>
              <span class="flex h-full w-[191px] items-center border-r border-[#c0c0c0] pl-[20px]">汇总信息</span>
              <span class="flex h-full w-[127px] items-center pl-[2px]">砌体加筋</span>
              <span class="h-full flex-1 border-x border-[#c0c0c0]"></span>
            </div>
            <div class="flex h-[19px] items-center border-b border-[#c0c0c0]">
              <span class="flex h-full w-[22px] items-center justify-center border-r border-[#c0c0c0] bg-[#f5f5f5]">7</span>
              <span class="flex h-full w-[191px] items-center border-r border-[#c0c0c0] pl-[20px]">备注</span>
              <span class="h-full w-[127px]"></span>
              <span class="h-full flex-1 border-x border-[#c0c0c0]"></span>
            </div>
            <div class="flex h-[19px] items-center border-b border-[#c0c0c0]">
              <span class="flex h-full w-[22px] items-center justify-center border-r border-[#c0c0c0] bg-[#f5f5f5]">8</span>
              <span class="flex h-full w-[191px] items-center border-r border-[#c0c0c0] pl-[3px] text-[#8a8a8a]"><i class="flex h-[12px] w-[12px] items-center justify-center border border-[#9a9a9a] not-italic text-black">+</i><span class="ml-[5px]">显示样式</span></span>
              <span class="h-full w-[127px]"></span>
              <span class="h-full flex-1 border-x border-[#c0c0c0]"></span>
            </div>
            </div>
          </div>
        </div>
      </div>
    </div>
  </section>
</main>

<!-- status bar -->
<footer class="mt-[3px] flex h-[20px] shrink-0 items-stretch gap-[3px] whitespace-nowrap bg-[#f0f0f0] [&>span]:flex [&>span]:items-center [&>span]:border [&>span]:border-[#d9d9d9] [&>span]:bg-[#f7f7f7] [&>span]:pl-[2px] [&_small]:text-[10px] [&_small]:font-['DejaVu_Sans_Mono']">
  <span class="w-[147px]"></span>
  <span class="w-[77px]">层高<small>:4.5m</small></span>
  <span class="w-[97px]">底标高<small>:-0.05m</small></span>
  <span class="w-[48px]"><small>0</small></span>
  <span class="flex-1">名称在当前层当前构件类型下不允许重名</span>
  <span class="w-[70px]"><small>235.8 FPS</small></span>
</footer>

<!-- taskbar -->
<div class="flex h-[40px] shrink-0 items-center whitespace-nowrap bg-[#07141c] text-[#e8e8e8]">
  <div class="flex h-full w-[48px] items-center justify-center bg-black">
    <svg class="h-[16px] w-[16px]" viewBox="0 0 16 16"><path d="M0 2.300 6.500 1.400v6.200H0zM7.300 1.300 16 0v7.600H7.300zM0 8.400h6.500v6.200L0 13.700zM7.300 8.400H16V16l-8.700-1.200z" fill="#fff"/></svg>
  </div>
  <div class="flex h-full w-[344px] items-center bg-[#333] text-[14px] text-[#9a9a9a]">
    <i class="ml-[10px] h-[20px] w-[20px] rounded-full border-[3px] border-[#e6e6e6]"></i>
    <span class="ml-[6px]">在这里输入你要搜索的内容</span>
    <svg class="ml-[112px] h-[18px] w-[12px]" viewBox="0 0 12 18"><rect x="3" y="1" width="6" height="10" rx="3" fill="none" stroke="#9a9a9a"/><path d="M1 8c0 6 10 6 10 0M6 13v4M3 17h6" fill="none" stroke="#9a9a9a"/></svg>
  </div>
  <svg class="ml-[14px] h-[14px] w-[20px]" viewBox="0 0 20 14"><path d="M5 .5h10v13H5zM0 3h3v8H0M20 3h-3v8h3" fill="none" stroke="#fff"/></svg>
  <svg class="ml-[30px] h-[21px] w-[21px]" viewBox="0 0 21 21"><path d="M10 9C4 10 0 7 1 3s9-3 9 2zM11 9c1-6 4-9 8-8s3 9-2 9zM11 12c6-1 10 2 9 6s-9 3-9-2zM10 12c-1 6-4 9-8 8s-3-9 2-9z" fill="#e6e6e6"/></svg>
  <svg class="ml-[31px] h-[21px] w-[20px]" viewBox="0 0 20 21"><path d="M3 13c-2-8 8-12 12-6l1 4H6c0 5 6 6 10 3v3c-5 3-12 2-13-4zM6 8h7c-1-3-6-3-7 0z" fill="#e6e6e6"/><path d="M1 14C0 6 10-2 18 1" fill="none" stroke="#e6e6e6"/></svg>
  <svg class="ml-[30px] h-[20px] w-[19px]" viewBox="0 0 19 20"><path d="M14 3C6 0 1 6 2 11s8 8 12 5 3-9-1-9-6 5-3 7 5-2 3-3" fill="none" stroke="#c4c4c4" stroke-width="1.400"/></svg>
  <svg class="ml-[35px] h-[20px] w-[20px]" viewBox="0 0 20 20"><path d="M1 9C2 3 6 0 11 0c5 0 8 4 8 11H7c0 5 7 6 11 3v4c-6 3-14 2-15-5-1-2 0-3 1-5-2 1-3 2-3 1zM7 7h7c0-4-6-4-7 0z" fill="#0b78d6"/></svg>
  <svg class="ml-[26px] h-[24px] w-[24px]" viewBox="0 0 24 24"><path d="M5 14c-2-8 8-12 12-6l1 4H8c0 5 6 5 9 3v3c-5 3-11 2-12-4zM8 9h7c-1-3-6-3-7 0z" fill="#3fa9ee"/><path d="M3 22c-3-4 6-18 19-20 3 2-1 8-4 11" fill="none" stroke="#f2c230" stroke-width="2"/></svg>
  <div class="ml-[17px] flex h-full w-[41px] items-center justify-center border-b-2 border-[#76b9ed]">
    <svg class="h-[21px] w-[23px]" viewBox="0 0 23 21"><path d="M0 2h9l2 2h12v15H0z" fill="#f6d26b"/><rect x="1" y="8" width="21" height="12" fill="#fbe59b"/><path d="M7 20v-6h9v6h-3v-3h-3v3z" fill="#3fa0e0"/></svg>
  </div>
  <div class="ml-[8px] flex h-full w-[40px] items-center justify-center border-b-2 border-[#76b9ed]">
    <svg class="h-[22px] w-[20px]" viewBox="0 0 20 22"><path d="M18 1C9 0 1 6 1 13c0 6 8 10 13 6 5-3 4-10-1-10-4 0-6 5-3 6 2 1 3-2 1-2l4-8z" fill="none" stroke="#1c83e8" stroke-width="3"/></svg>
  </div>
  <div class="ml-[9px] flex h-full w-[41px] items-center justify-center border-b-2 border-[#76b9ed]">
    <svg class="h-[24px] w-[22px]" viewBox="0 0 22 24"><circle cx="11" cy="12" r="9.500" fill="#a8da4f" stroke="#fff"/><path d="M6 12h10c0-5-9-5-10 0 0 5 7 6 10 3" fill="none" stroke="#fff" stroke-width="1.800"/></svg>
  </div>
  <div class="ml-[4px] flex h-full w-[48px] items-center justify-center border-b-2 border-[#76b9ed] bg-[#2a3a44]">
    <svg class="h-[24px] w-[24px]" viewBox="0 0 24 24"><rect width="24" height="24" rx="3" fill="#0d8be8"/><path d="M12 4v16M5 11h6c0-3 5-3 5 0s-4 3-4 0M12 11h7" fill="none" stroke="#fff" stroke-width="2"/></svg>
  </div>
  <div class="ml-[5px] flex h-full w-[40px] items-center justify-center border-b-2 border-[#76b9ed]">
    <svg class="h-[24px] w-[23px]" viewBox="0 0 23 24"><rect width="23" height="24" rx="2" fill="#f2a33a"/><rect x="4" y="5" width="14" height="15" fill="#f8eed0" transform="rotate(-6 11 12)"/><path d="M6 9h9M6 12h9M6 15h7" stroke="#b58a4a"/><path d="M21 2 11 16" stroke="#c7501e" stroke-width="2"/></svg>
  </div>
  <span class="ml-[31px]">链接</span>
  <svg class="ml-[15px] h-[15px] w-[19px]" viewBox="0 0 19 15"><path d="M1 5c5-5 12-5 17 0M4 8.500c3-3 8-3 11 0" fill="none" stroke="#8ccf1c" stroke-width="2"/><circle cx="9.500" cy="13" r="2" fill="#8ccf1c"/></svg>
  <svg class="ml-[11px] h-[8px] w-[13px]" viewBox="0 0 13 8"><path d="M1 7l5.500-6L12 7" fill="none" stroke="#e8e8e8" stroke-width="1.200"/></svg>
  <svg class="ml-[34px] h-[13px] w-[16px]" viewBox="0 0 16 13"><rect x="3" y="4" width="12" height="8" fill="#d0d0d0"/><path d="M1 0v3M4 0v3M0 3h5v2H0z" stroke="#fff"/></svg>
  <svg class="ml-[11px] h-[13px] w-[13px]" viewBox="0 0 13 13"><path d="M1 8c2-3 4-5 9-7M3 10c2-3 3-4 7-6M5 12c1-2 2-3 5-4" fill="none" stroke="#ddd" stroke-dasharray="1.500 .8"/></svg>
  <svg class="ml-[8px] h-[13px] w-[16px]" viewBox="0 0 16 13"><path d="M1 4h3l4-3v11L4 9H1z" fill="none" stroke="#fff"/><path d="M10 4c1 1.500 1 3.500 0 5M13 2c2 3 2 6 0 9" fill="none" stroke="#ccc"/></svg>
  <svg class="ml-[8px] h-[13px] w-[23px]" viewBox="0 0 23 13"><rect x=".5" y=".5" width="22" height="12" fill="none" stroke="#fff"/><path d="M3 3.500h17M3 6h17" stroke="#fff" stroke-dasharray="1.500 1"/><path d="M6 9.500h11" stroke="#fff"/></svg>
  <span class="ml-[10px] w-[12px] text-[#f2f2f2]">中</span>
  <svg class="ml-[15px] h-[16px] w-[16px]" viewBox="0 0 16 16"><path d="M3 1l12-1 1 14-13 2L0 3z" fill="#f0582a"/><path d="M11.500 4.500c-4-1.500-6 1-4 3s4 2 2 4-4 1-5 0" fill="none" stroke="#fff" stroke-width="2"/></svg>
  <div class="ml-[15px] flex w-[60px] flex-col items-center gap-[7px] text-[12px]"><span>16:39</span><span>2018/6/8</span></div>
  <div class="relative ml-[19px] h-[24px] w-[22px]">
    <svg class="h-[13px] w-[14px]" viewBox="0 0 14 13"><path d="M0 0h14v10H7l-3 3v-3H0z" fill="#fff"/><path d="M2 3h10M2 5.500h10M2 8h10" stroke="#07141c"/></svg>
    <span class="absolute left-[6px] top-[9px] flex h-[14px] w-[14px] items-center justify-center rounded-full bg-[#555] text-[10px] font-bold text-white">1</span>
  </div>
</div>

<!-- red annotation frames -->
<div class="absolute left-[-3px] top-[262px] h-[54px] w-[185px] border-[7px] border-[#ff0000]"></div>
<div class="absolute left-[585px] top-[111px] h-[120px] w-[209px] border-[7px] border-[#ff0000]"></div>

<!-- parameter window -->
<div class="absolute left-[673px] top-[251px] flex h-[455px] w-[654px] flex-col border border-t-[#777] border-x-[#8aa3bd] border-b-0 bg-[#c4d9ee]">
  <div class="flex h-[30px] shrink-0 items-center bg-gradient-to-b from-[#9db8d5] to-[#bcd3ea] pl-[7px] pt-[3px]">参数图</div>
  <div class="ml-[7px] mr-[8px] flex-1 overflow-hidden border-t border-white bg-black">
    <svg class="block h-[423px] w-[637px]" viewBox="681 283 637 423" xmlns="http://www.w3.org/2000/svg">
      <g fill="none" stroke="#fff" stroke-width="1">
        <path d="M814.500 344v22M947.500 344v22M1072.500 344v22M1220.500 344v23"/>
        <path d="M814 354h25M921 354h26M1072 354h30M1183 354h37"/>
        <path d="M782 396h164M1072 396h157M782 492h164M1072 492h157"/>
        <path d="M782.500 376v137M1229.500 378v138"/>
        <rect x="946.500" y="379.500" width="125" height="124"/>
        <path d="M782 422l-20 5 37 11-17 5M1230 425l19 4-38 11 19 5"/>
        <path d="M1044 396.500h23M1044 492.500h23M1055.500 396v7M1055.500 464v28"/>
        <path d="M862 522l7-116M862 522l26-56" stroke-width=".8"/>
      </g>
      <path d="M814 354l8-3v6zM947 354l-8-3v6zM1072 354l8-3v6zM1220 354l-8-3v6zM1055.500 492l-3-8h6zM1055.500 396l-3 8h6z" fill="#fff"/>
      <path d="M816 435v-19h211M1072 416h145v15M816 457v19h401v-11" fill="none" stroke="#00ffff" stroke-width="4"/>
      <text x="880" y="367" text-anchor="middle" font-size="40" fill="#ff0000" font-family="Liberation Serif">1000</text>
      <text x="1142" y="367" text-anchor="middle" font-size="40" fill="#fff" font-family="Liberation Serif">1000</text>
      <text transform="translate(1063 434) rotate(-90)" text-anchor="middle" font-size="40" fill="#fff" font-family="Liberation Serif">240</text>
      <text x="852" y="551" text-anchor="middle" font-size="38" fill="#fff" font-family="Liberation Serif">1#</text>
      <text x="1008" y="617" text-anchor="middle" font-size="58" font-weight="300" fill="#fff" font-family="Noto Sans CJK SC">预留钢筋</text>
      <text x="879" y="685" textLength="233" font-size="58" font-weight="300" fill="#fff" font-family="Liberation Serif, Noto Sans CJK SC">一字-3形</text>
    </svg>
  </div>
</div>

<!-- sogou IME bar -->
<div class="absolute left-[722px] top-[33px] flex h-[24px] w-[210px] items-center border border-[#bcd4ea] bg-[#eef5fb] pl-[31px] text-[#1a6fc4]">
  <span class="w-[14px] shrink-0 text-[14px] font-bold">英</span>
  <span class="ml-[12px] -mt-[8px] w-[8px] shrink-0 text-[13px] font-bold">’,</span>
  <svg class="ml-[9px] h-[14px] w-[13px] shrink-0" viewBox="0 0 14 14"><circle cx="7" cy="7" r="6" fill="none" stroke="#1a6fc4" stroke-width="1.500"/><circle cx="5" cy="5.500" r="1" fill="#1a6fc4"/><circle cx="9" cy="5.500" r="1" fill="#1a6fc4"/><path d="M4 8.500c1 2.500 5 2.500 6 0" fill="none" stroke="#1a6fc4" stroke-width="1.200"/></svg>
  <svg class="ml-[12px] h-[16px] w-[12px] shrink-0" viewBox="0 0 12 16"><rect x="3" width="6" height="10" rx="3" fill="#1a6fc4"/><path d="M1 7c0 6 10 6 10 0M6 12v3M3 15h6" fill="none" stroke="#1a6fc4" stroke-width="1.300"/></svg>
  <svg class="ml-[7px] h-[12px] w-[16px] shrink-0" viewBox="0 0 16 12"><rect width="16" height="12" rx="2" fill="#1a6fc4"/><path d="M2 3.500h12M2 6h12" stroke="#fff" stroke-dasharray="1.500 1"/><path d="M4 9h8" stroke="#fff"/></svg>
  <svg class="ml-[8px] h-[15px] w-[15px] shrink-0" viewBox="0 0 16 15"><circle cx="6" cy="4" r="3" fill="#aab7c4"/><path d="M0 14c0-6 10-6 10 0z" fill="#aab7c4"/><rect x="8" y="9" width="8" height="6" rx="1" fill="#8b98a6"/></svg>
  <svg class="ml-[6px] h-[14px] w-[13px] shrink-0" viewBox="0 0 14 14"><path d="M4 0 0 3l2 3 1.500-1V14h7V5L12 6l2-3-4-3-3 2z" fill="#1a6fc4"/></svg>
  <svg class="ml-[9px] h-[14px] w-[13px] shrink-0" viewBox="0 0 14 14"><path d="M1 12 7 6C6 3 8 0 12 1L9.500 3.500l1 1L13 2c1 4-2 6-5 5l-6 6z" fill="#1a6fc4" stroke="#1a6fc4"/></svg>
</div>
<svg class="absolute left-[721px] top-[30px] h-[27px] w-[26px]" viewBox="0 0 26 27"><path d="M4 2 24 0l2 23-21 4L0 5z" fill="#f0582a"/><path d="M19 7c-7-3-11 2-7 5s8 3 4 7-7 2-9 0" fill="none" stroke="#fff" stroke-width="3.400"/></svg>

<!-- network widget -->
<div class="absolute left-[925px] top-[20px] flex h-[47px] w-[117px] rounded-full bg-white shadow-[0_1px_5px_rgba(0,0,0,0.35)] text-[#777]">
  <span class="ml-[3px] mt-[7px] flex h-[38px] w-[38px] items-center justify-center rounded-full bg-[#2fcf74]">
    <svg class="h-[24px] w-[26px]" viewBox="0 0 26 24"><path d="M2 9c6-7 16-7 22 0M6 13c4-4.500 10-4.500 14 0M9.500 17c2-2 5-2 7 0" fill="none" stroke="#fff" stroke-width="2.400"/><circle cx="13" cy="21" r="2" fill="#fff"/></svg>
  </span>
  <div class="ml-[6px] flex flex-col">
    <div class="mt-[10px] flex items-center text-[10px]"><svg class="h-[12px] w-[9px]" viewBox="0 0 9 12"><path d="M3 0v11L0 7" fill="none" stroke="#3fb54a" stroke-width="1.600"/><path d="M6 12V1l3 4" fill="none" stroke="#f08a1d" stroke-width="1.600"/></svg><span class="ml-[7px] font-['Noto_Sans']">0.00K/s</span></div>
    <div class="mt-[8px] flex items-center text-[10px]"><svg class="ml-px h-[12px] w-[8px]" viewBox="0 0 8 12"><path d="M2 0h4v2h2v10H0V2h2z" fill="#2fcf74"/></svg><span class="ml-[8px] font-['Noto_Sans']">0</span></div>
  </div>
</div>

<!-- score ball -->
<div class="absolute left-[1132px] top-[-27px] flex h-[45px] w-[45px] items-end justify-center rounded-full border-[3px] border-[#cfd8cf] bg-[#35b84a] pb-[3px] text-[12px] font-bold text-white shadow-[0_1px_3px_rgba(0,0,0,0.5)]">68</div>
</div>
</body></html>
